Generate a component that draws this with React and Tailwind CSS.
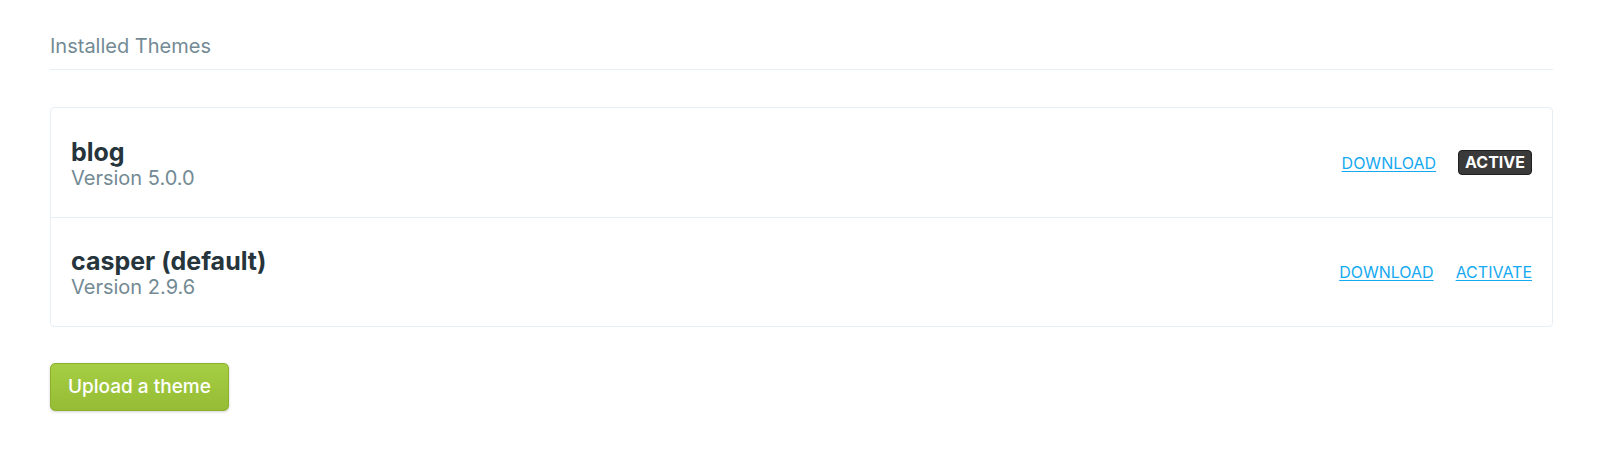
import React from 'react';

const themes = [
  { name: 'blog', version: '5.0.0', active: true },
  { name: 'casper (default)', version: '2.9.6', active: false },
];

export default function App() {
  return (
    <div className="min-h-[454px] bg-white pl-[50px] pr-[47px] pt-[34px] font-['Inter','Liberation_Sans',sans-serif]">
      <h2 className="border-b border-[#e5eff5] pb-[11px] text-[20px] leading-[24px] text-[#738a94]">
        Installed Themes
      </h2>

      <div className="mt-[37px] rounded-[4px] border border-[#e5eff5]">
        {themes.map((t, i) => (
          <div
            key={t.name}
            className={`flex h-[109px] items-center justify-between px-5 ${i > 0 ? 'border-t border-[#e5eff5]' : ''}`}
          >
            <div className="pt-[3px]">
              <h3 className="text-[25px] font-bold leading-[28px] text-[#26343b]">{t.name}</h3>
              <p className="text-[20px] leading-[25px] text-[#738a94]">Version {t.version}</p>
            </div>
            <div className="flex items-center gap-[22px]">
              <a href="#" className="text-[16px] text-[#14a9f0] underline underline-offset-2">DOWNLOAD</a>
              {t.active ? (
                <span className="rounded-[4px] border border-[#1f1f1f] bg-[#3a3a3a] px-[6px] py-[1px] text-[16px] font-bold leading-[21px] text-white">
                  ACTIVE
                </span>
              ) : (
                <a href="#" className="text-[16px] text-[#14a9f0] underline underline-offset-2">ACTIVATE</a>
              )}
            </div>
          </div>
        ))}
      </div>

      <button className="mt-[36px] h-[48px] rounded-[5px] border border-[#8cb02e] bg-gradient-to-b from-[#a6ce44] to-[#95bc34] px-[17px] text-[19px] font-medium text-white shadow-[0_1px_3px_rgba(0,0,0,0.18)]">
        Upload a theme
      </button>
    </div>
  );
}
